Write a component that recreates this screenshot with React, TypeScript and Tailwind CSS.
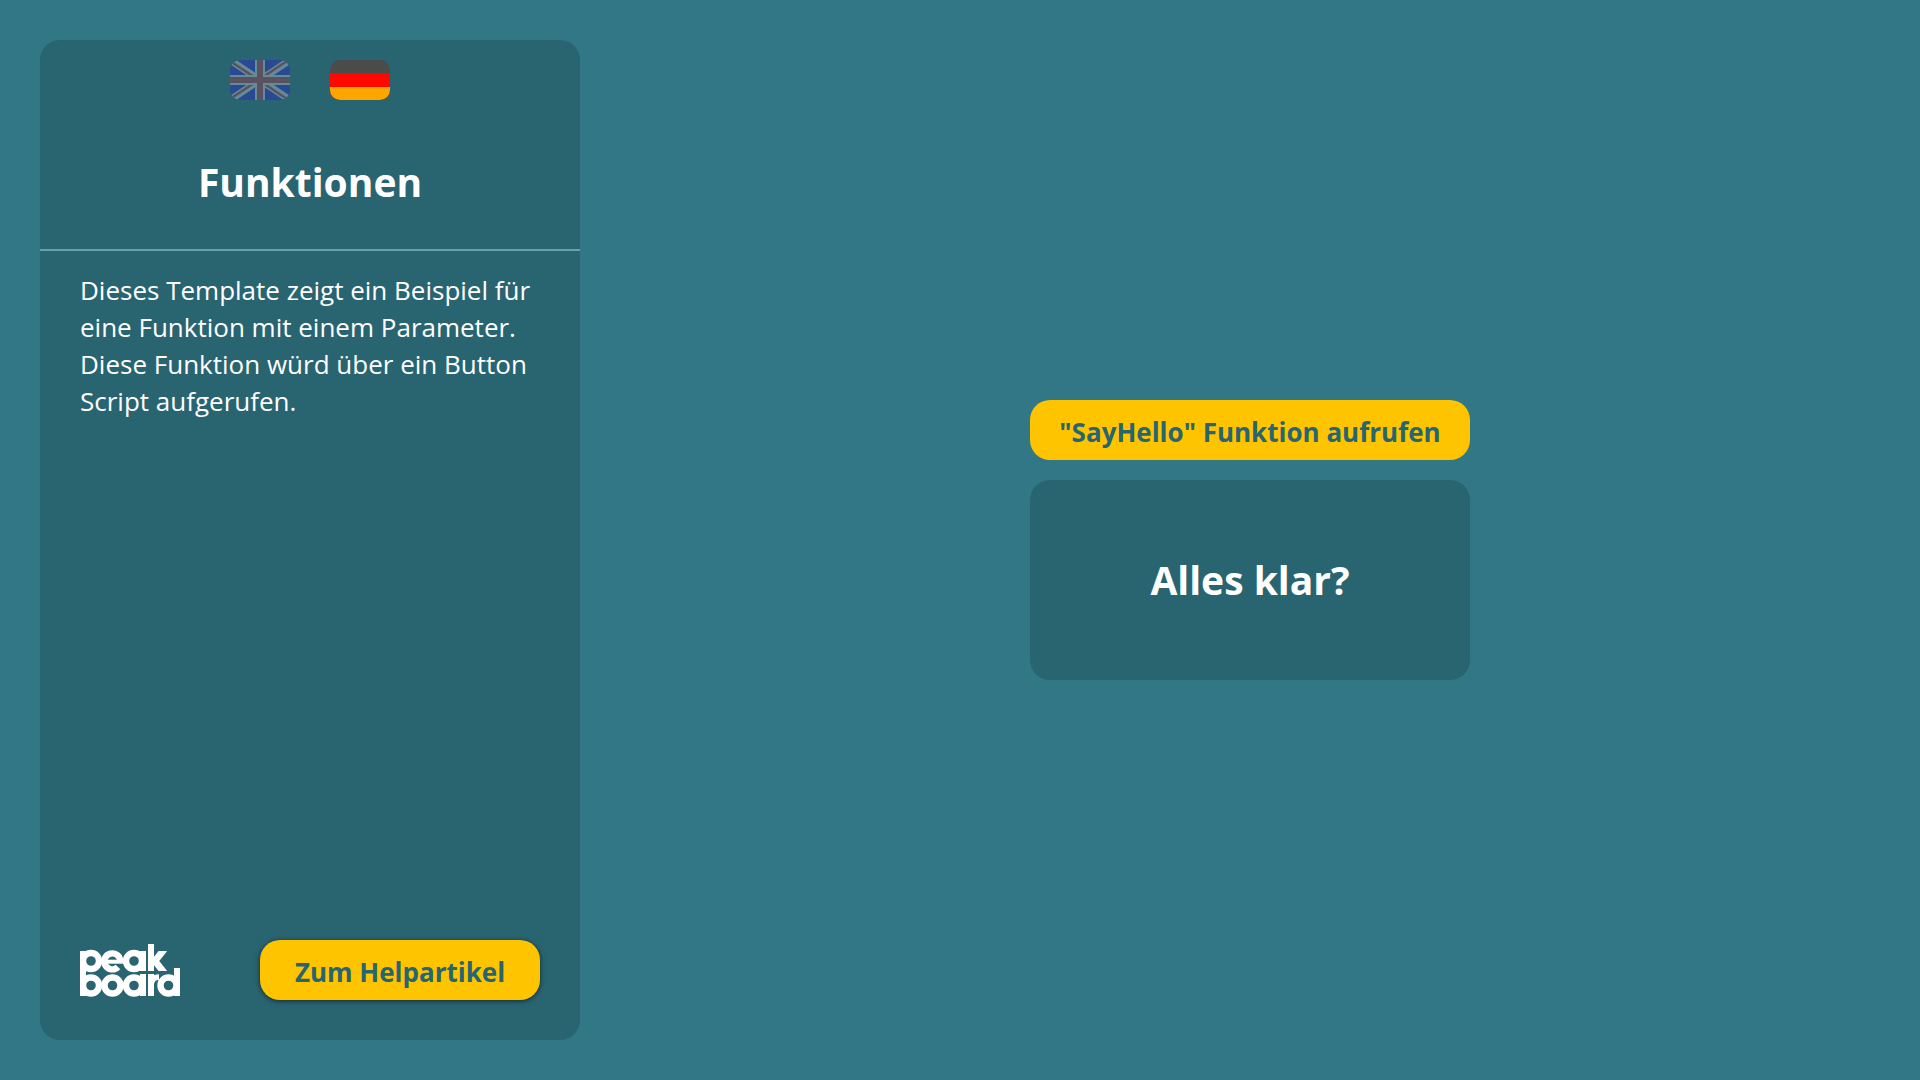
function Logo() {
  return (
    <svg viewBox="0 0 100 54" className="w-[100px]" role="img" aria-label="peakboard">
      <g fill="none" stroke="#fff" strokeWidth="6.4">
        <circle cx="11" cy="18" r="8" />
        <path d="M40.300 18.500A8 8 0 1 0 38 24" />
        <path d="M26 18.700H43.300" strokeWidth="4" />
        <circle cx="54" cy="18" r="8" />
        <circle cx="11" cy="42.500" r="8" />
        <circle cx="32.500" cy="42.500" r="8" />
        <circle cx="54" cy="42.500" r="8" />
        <circle cx="88.500" cy="42.500" r="8" />
        <path d="M71 43C71 37 73.500 34 79 34" strokeWidth="5.700" />
        <path d="M84.500 6L75 18L84.500 30" clipPath="url(#logo-arms)" strokeWidth="6.800" />
      </g>
      <clipPath id="logo-arms">
        <rect x="70" y="8" width="20" height="20" />
      </clipPath>
      <g fill="#fff">
        <rect y="8" width="6" height="45" />
        <rect x="60" y="8" width="6" height="20" />
        <rect x="60" y="31" width="6" height="22" />
        <rect x="68" y="1" width="6" height="27" />
        <rect x="68" y="31" width="6" height="22" />
        <rect x="94" y="25" width="6" height="28" />
      </g>
    </svg>
  );
}

export default function App() {
  return (
    <div className="flex min-h-screen bg-[#317786] font-['Open_Sans','Noto_Sans',sans-serif]">
      <aside className="my-10 ml-10 flex w-[540px] shrink-0 flex-col rounded-[20px] bg-[#296471] text-white">
        <div className="flex justify-center gap-10 pt-5">
          <button type="button" aria-label="English" className="h-10 w-[60px] overflow-hidden rounded-[10px] opacity-50">
            <svg viewBox="0 0 60 40" className="size-full" aria-hidden="true">
              <rect width="60" height="40" fill="#2b30b8" />
              <path d="M0 0L60 40M60 0L0 40" stroke="#a0b4b8" strokeWidth="7" />
              <path d="M0 1L30 21M60 -1L30 19M30 21L60 41M30 19L0 39" stroke="#904050" strokeWidth="2.500" />
              <path d="M30 0V40M0 20H60" stroke="#a0b4b8" strokeWidth="10" />
              <path d="M30 0V40M0 20H60" stroke="#904050" strokeWidth="6" />
            </svg>
          </button>
          <button type="button" aria-label="Deutsch" className="h-10 w-[60px] overflow-hidden rounded-[10px]">
            <svg viewBox="0 0 60 40" className="size-full" aria-hidden="true">
              <rect width="60" height="40" fill="#4b4b4b" />
              <rect y="13" width="60" height="27" fill="#ff0800" />
              <rect y="27" width="60" height="13" fill="#ffa500" />
            </svg>
          </button>
        </div>
        <h1 className="mt-[52px] text-center text-[39px] leading-[60px] font-bold">Funktionen</h1>
        <hr className="mt-[37px] border-t-2 border-[#66a2ad]" />
        <p className="mt-[21px] pr-8 pl-10 text-[26px] leading-[37px]">
          Dieses Template zeigt ein Beispiel für eine Funktion mit einem Parameter. Diese Funktion würd über ein Button Script aufgerufen.
        </p>
        <div className="mt-auto flex items-center justify-between p-10">
          <Logo />
          <a href="#hilfe" className="flex h-[60px] w-[280px] items-center justify-center rounded-[20px] bg-[#ffc400] pt-1 text-[26px] font-bold text-[#296471] shadow-[0_1px_5px_rgba(0,0,0,0.6)]">Zum Helpartikel</a>
        </div>
      </aside>
      <main className="flex flex-1 flex-col items-center justify-center">
        <div className="flex w-[440px] flex-col gap-5">
          <button type="button" className="h-[60px] rounded-[20px] bg-[#ffc400] pt-1 text-[26px] font-bold text-[#296471]">"SayHello" Funktion aufrufen</button>
          <output className="flex h-[200px] items-center justify-center rounded-[20px] bg-[#296471] text-[39px] font-bold text-white">Alles klar?</output>
        </div>
      </main>
    </div>
  );
}
